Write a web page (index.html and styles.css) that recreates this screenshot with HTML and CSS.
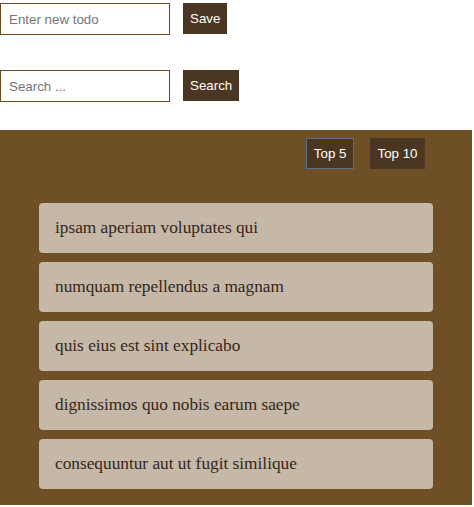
FILE: index.html
```html
<!DOCTYPE html>
<html>
<head>
<meta charset="utf-8">
<link rel="stylesheet" href="styles.css">
</head>
<body>
<div class="form-row first">
  <input class="field" type="text" placeholder="Enter new todo">
  <button class="btn">Save</button>
</div>
<div class="form-row second">
  <input class="field" type="text" placeholder="Search ...">
  <button class="btn">Search</button>
</div>
<section class="panel">
  <div class="tops">
    <button class="btn top active">Top 5</button>
    <button class="btn top">Top 10</button>
  </div>
  <ul class="list">
    <li class="item">ipsam aperiam voluptates qui</li>
    <li class="item">numquam repellendus a magnam</li>
    <li class="item">quis eius est sint explicabo</li>
    <li class="item">dignissimos quo nobis earum saepe</li>
    <li class="item">consequuntur aut ut fugit similique</li>
  </ul>
</section>
</body>
</html>
```
FILE: styles.css
```css
html, body {
  margin: 0;
  padding: 0;
  background: #ffffff;
  font-family: "Liberation Sans", Arial, sans-serif;
}
.form-row {
  display: flex;
  align-items: flex-start;
  gap: 13px;
  height: 32px;
}
.form-row.first {
  margin-top: 3px;
}
.form-row.second {
  margin-top: 35px;
}
.field {
  box-sizing: border-box;
  width: 170px;
  height: 32px;
  margin: 0;
  padding: 0 8px;
  border: 1px solid #6b4a1e;
  border-radius: 0;
  font-family: "Liberation Sans", Arial, sans-serif;
  font-size: 13.33px;
  color: #333;
  background: #fff;
}
.field::placeholder {
  color: #757575;
}
.btn {
  box-sizing: border-box;
  height: 31px;
  margin: 0;
  padding: 0 6px;
  border: 1px solid #4b3621;
  border-radius: 0;
  background: #4b3621;
  color: #ffffff;
  font-family: "Liberation Sans", Arial, sans-serif;
  font-size: 13.33px;
}
.panel {
  box-sizing: border-box;
  margin-top: 28px;
  margin-right: 2px;
  height: 375px;
  background: #6f4f25;
  padding: 8px 47px 16px 39px;
}
.tops {
  display: flex;
  justify-content: flex-end;
  gap: 16px;
}
.btn.top {
  padding: 0 6.5px;
}
.btn.top.active {
  border-color: #56708c;
}
.list {
  list-style: none;
  margin: 34px -8px 0 0;
  padding: 0;
  display: flex;
  flex-direction: column;
  gap: 9px;
}
.item {
  box-sizing: border-box;
  height: 50px;
  display: flex;
  align-items: center;
  padding: 0 16px;
  background: #c5b8a7;
  border-radius: 4px;
  font-family: "Liberation Serif", "Times New Roman", serif;
  font-size: 17.3px;
  color: #35261a;
}
```
